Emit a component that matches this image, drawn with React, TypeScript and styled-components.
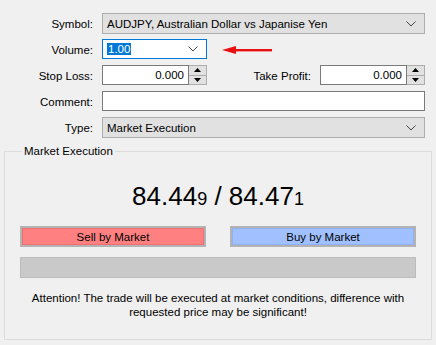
import React from 'react';
import styled, { createGlobalStyle } from 'styled-components';

const GlobalStyle = createGlobalStyle`
    html, body {
        margin: 0;
        padding: 0;
        background: #f0f0f0;
    }
    body {
        font-family: "Liberation Sans", Arial, sans-serif;
        font-size: 11.5px;
        color: #000;
    }
`

const Page = styled.div`
    width: 436px;
    height: 345px;
    padding-top: 13px;
    box-sizing: border-box;
    overflow: hidden;
`

const Form = styled.div`
    display: grid;
    grid-template-columns: 93px 105px 95px 105px;
    grid-auto-rows: 21px;
    column-gap: 9px;
    row-gap: 5px;
`

const Label = styled.div`
    display: flex;
    align-items: center;
    justify-content: flex-end;
    white-space: nowrap;
`

const Wide = styled.div`
    grid-column: 2 / -1;
    display: flex;
`

const Combo = styled.div<{ $focused?: boolean; $readonly?: boolean }>`
    flex: 1;
    display: flex;
    align-items: center;
    box-sizing: border-box;
    height: ${(p) => (p.$readonly ? '21px' : '20px')};
    padding: 0 8px 0 4px;
    border: 1px solid ${(p) => (p.$focused ? '#0078d7' : '#adadad')};
    background: ${(p) => (p.$readonly ? '#e1e1e1' : '#fff')};
`

const ComboText = styled.span`
    flex: 1;
    white-space: nowrap;
    overflow: hidden;
`

const Selected = styled.span`
    background: #0078d7;
    color: #fff;
    padding: 1px 1px;
`

const TextBox = styled.div`
    flex: 1;
    height: 20px;
    box-sizing: border-box;
    border: 1px solid #7a7a7a;
    background: #fff;
`

const Spin = styled.div`
    display: flex;
    height: 20px;
    box-sizing: border-box;
`

const SpinInput = styled.div`
    flex: 1;
    display: flex;
    align-items: center;
    justify-content: flex-end;
    padding-right: 4px;
    border: 1px solid #7a7a7a;
    background: #fff;
`

const SpinButtons = styled.div`
    width: 17px;
    display: flex;
    flex-direction: column;
    border: 1px solid #adadad;
    border-left: none;
    background: #e1e1e1;
`

const SpinHalf = styled.div<{ $down?: boolean }>`
    flex: 1;
    display: flex;
    align-items: center;
    justify-content: center;
    border-top: ${(p) => (p.$down ? '1px solid #adadad' : 'none')};
`

const Pointer = styled.div`
    display: flex;
    align-items: center;
    padding-left: 6px;
`

const Group = styled.fieldset`
    margin: 7px 4px 0 4px;
    padding: 0 15px 0 15px;
    height: 195px;
    box-sizing: border-box;
    border: 1px solid #dcdcdc;
    display: flex;
    flex-direction: column;
`

const Legend = styled.legend`
    padding: 0 2px;
    margin-left: 2px;
`

const Price = styled.div`
    text-align: center;
    font-size: 26px;
    margin-top: 24px;
    height: 30px;
    line-height: 30px;
`

const Small = styled.span`
    font-size: 18px;
`

const Buttons = styled.div`
    display: flex;
    justify-content: space-between;
    margin-top: 15px;
`

const TradeButton = styled.div<{ $fill: string; $edge: string }>`
    width: 186px;
    height: 21px;
    box-sizing: border-box;
    border: 2px solid #b3b3b3;
    background: ${(p) => p.$fill};
    box-shadow: inset 0 0 0 1px ${(p) => p.$edge};
    display: flex;
    align-items: center;
    justify-content: center;
`

const Progress = styled.div`
    margin-top: 10px;
    height: 21px;
    box-sizing: border-box;
    background: #c9c9c9;
    border: 1px solid #bcbcbc;
`

const Note = styled.div`
    margin-top: 13px;
    text-align: center;
    line-height: 14px;
`

function Chevron() {
    return (
        <svg width="10" height="6" viewBox="0 0 10 6">
            <polyline points="0.5,0.5 5,5 9.5,0.5" fill="none" stroke="#444" strokeWidth="1" />
        </svg>
    );
}

function SpinBox({ value }: { value: string }) {
    return (
        <Spin>
            <SpinInput>{value}</SpinInput>
            <SpinButtons>
                <SpinHalf>
                    <svg width="7" height="4" viewBox="0 0 7 4"><polygon points="3.5,0 7,4 0,4" fill="#000" /></svg>
                </SpinHalf>
                <SpinHalf $down>
                    <svg width="7" height="4" viewBox="0 0 7 4"><polygon points="0,0 7,0 3.5,4" fill="#000" /></svg>
                </SpinHalf>
            </SpinButtons>
        </Spin>
    );
}

function App() {
    return (
        <Page>
            <GlobalStyle />
            <Form>
                <Label>Symbol:</Label>
                <Wide>
                    <Combo $readonly>
                        <ComboText>AUDJPY, Australian Dollar vs Japanise Yen</ComboText>
                        <Chevron />
                    </Combo>
                </Wide>

                <Label>Volume:</Label>
                <Combo $focused>
                    <ComboText><Selected>1.00</Selected></ComboText>
                    <Chevron />
                </Combo>
                <Pointer>
                    <svg width="50" height="10" viewBox="0 0 50 10">
                        <polygon points="0,5 14,1 14,9" fill="#e81010" />
                        <rect x="12" y="4" width="38" height="2.4" fill="#e81010" />
                    </svg>
                </Pointer>
                <div />

                <Label>Stop Loss:</Label>
                <SpinBox value="0.000" />
                <Label>Take Profit:</Label>
                <SpinBox value="0.000" />

                <Label>Comment:</Label>
                <Wide>
                    <TextBox />
                </Wide>

                <Label>Type:</Label>
                <Wide>
                    <Combo $readonly>
                        <ComboText>Market Execution</ComboText>
                        <Chevron />
                    </Combo>
                </Wide>
            </Form>

            <Group>
                <Legend>Market Execution</Legend>
                <Price>
                    84.44<Small>9</Small> / 84.47<Small>1</Small>
                </Price>
                <Buttons>
                    <TradeButton $fill="#ff8080" $edge="#f07070">Sell by Market</TradeButton>
                    <TradeButton $fill="#a0c0ff" $edge="#90b0f0">Buy by Market</TradeButton>
                </Buttons>
                <Progress />
                <Note>
                    Attention! The trade will be executed at market conditions, difference with<br />
                    requested price may be significant!
                </Note>
            </Group>
        </Page>
    );
}

export default App;
